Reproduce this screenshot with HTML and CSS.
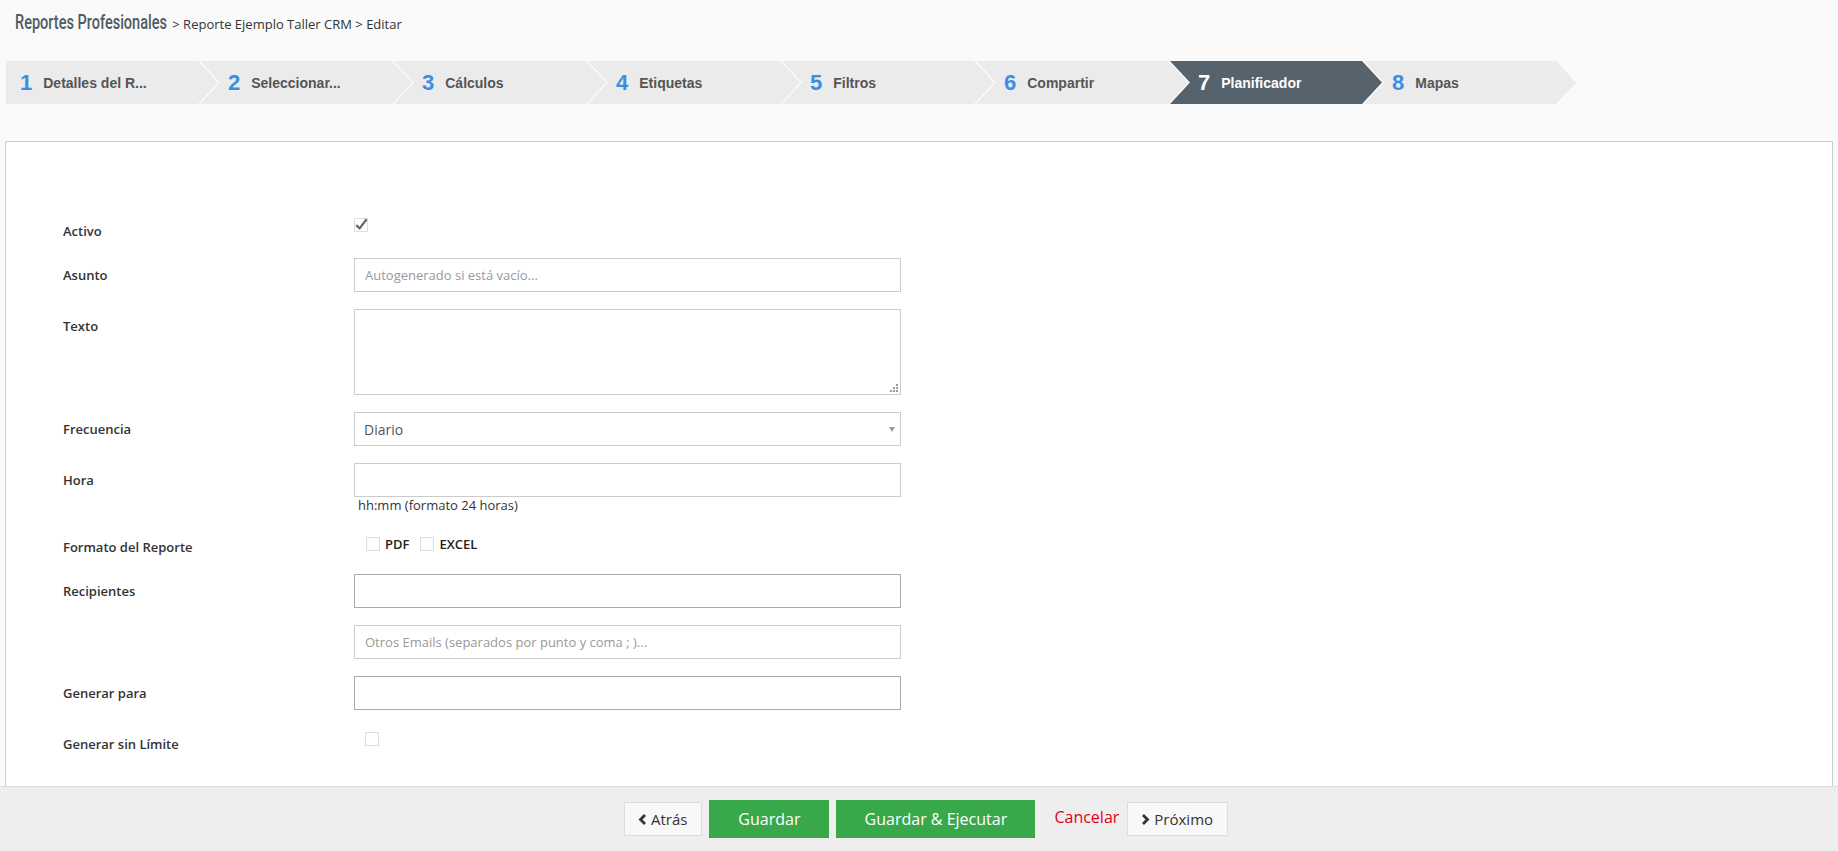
FILE: index.html
```html
<!DOCTYPE html>
<html lang="es">
<head>
    <meta charset="UTF-8">
    <meta name="viewport" content="width=device-width, initial-scale=1.0">
    <title>Reportes Profesionales - Editar</title>
    <link rel="stylesheet" href="styles.css">
</head>
<body>
    <div class="crumbs">
        <span class="crumbs-title">Reportes Profesionales</span>
        <span class="crumbs-path">&gt; Reporte Ejemplo Taller CRM &gt; Editar</span>
    </div>

    <ul class="wizard">
        <li class="step first"><span class="step-num">1</span><span class="step-name">Detalles del R...</span></li>
        <li class="step"><span class="step-num">2</span><span class="step-name">Seleccionar...</span></li>
        <li class="step"><span class="step-num">3</span><span class="step-name">Cálculos</span></li>
        <li class="step"><span class="step-num">4</span><span class="step-name">Etiquetas</span></li>
        <li class="step"><span class="step-num">5</span><span class="step-name">Filtros</span></li>
        <li class="step"><span class="step-num">6</span><span class="step-name">Compartir</span></li>
        <li class="step active"><span class="step-num">7</span><span class="step-name">Planificador</span></li>
        <li class="step"><span class="step-num">8</span><span class="step-name">Mapas</span></li>
    </ul>

    <div class="panel">
        <form class="form">
            <div class="row">
                <label class="row-label">Activo</label>
                <div class="row-ctrl">
                    <span class="check check-active">
                        <svg width="14" height="14" viewBox="0 0 14 14"><path d="M2.2 7.2 L5.6 10.4 L12.6 1.2" fill="none" stroke="#6a6a6a" stroke-width="2.3"/></svg>
                    </span>
                </div>
            </div>

            <div class="row">
                <label class="row-label">Asunto</label>
                <div class="row-ctrl">
                    <input class="input" type="text" placeholder="Autogenerado si está vacío...">
                </div>
            </div>

            <div class="row">
                <label class="row-label">Texto</label>
                <div class="row-ctrl textarea-wrap">
                    <textarea class="input textarea"></textarea>
                    <svg class="grip" width="8" height="8" viewBox="0 0 8 8">
                        <rect x="6" y="0" width="2" height="2" fill="#999"/>
                        <rect x="6" y="3" width="2" height="2" fill="#999"/>
                        <rect x="3" y="3" width="2" height="2" fill="#999"/>
                        <rect x="6" y="6" width="2" height="2" fill="#999"/>
                        <rect x="3" y="6" width="2" height="2" fill="#999"/>
                        <rect x="0" y="6" width="2" height="2" fill="#999"/>
                    </svg>
                </div>
            </div>

            <div class="row">
                <label class="row-label">Frecuencia</label>
                <div class="row-ctrl select-wrap">
                    <select class="input select">
                        <option>Diario</option>
                        <option>Semanal</option>
                        <option>Mensual</option>
                    </select>
                </div>
            </div>

            <div class="row">
                <label class="row-label">Hora</label>
                <div class="row-ctrl">
                    <input class="input" type="text">
                    <div class="help">hh:mm (formato 24 horas)</div>
                </div>
            </div>

            <div class="row">
                <label class="row-label">Formato del Reporte</label>
                <div class="row-ctrl formats">
                    <span class="check"></span><span class="format-name">PDF</span>
                    <span class="check"></span><span class="format-name">EXCEL</span>
                </div>
            </div>

            <div class="row">
                <label class="row-label">Recipientes</label>
                <div class="row-ctrl">
                    <input class="input strong" type="text">
                </div>
            </div>

            <div class="row">
                <span class="row-label"></span>
                <div class="row-ctrl">
                    <input class="input" type="text" placeholder="Otros Emails (separados por punto y coma ; )...">
                </div>
            </div>

            <div class="row">
                <label class="row-label">Generar para</label>
                <div class="row-ctrl">
                    <input class="input strong" type="text">
                </div>
            </div>

            <div class="row">
                <label class="row-label">Generar sin Límite</label>
                <div class="row-ctrl">
                    <span class="check check-limit"></span>
                </div>
            </div>
        </form>
    </div>

    <div class="footer">
        <button class="btn btn-light">
            <svg width="9" height="11" viewBox="0 0 9 11"><path d="M7 1 L2.5 5.5 L7 10" fill="none" stroke="#333" stroke-width="2.8"/></svg>
            Atrás
        </button>
        <button class="btn btn-green btn-save">Guardar</button>
        <button class="btn btn-green btn-run">Guardar &amp; Ejecutar</button>
        <a class="cancel" href="#">Cancelar</a>
        <button class="btn btn-light">
            <svg width="9" height="11" viewBox="0 0 9 11"><path d="M2 1 L6.5 5.5 L2 10" fill="none" stroke="#333" stroke-width="2.8"/></svg>
            Próximo
        </button>
    </div>
</body>
</html>
```

FILE: styles.css
```css
html, body {
    height: 100%;
}

body {
    margin: 0;
    display: flex;
    flex-direction: column;
    background: #fafafa;
    font-family: "Open Sans", Arial, sans-serif;
    color: #333;
}

/* breadcrumb */
.crumbs {
    display: flex;
    align-items: baseline;
    gap: 5px;
    padding: 10px 15px 0;
    height: 24px;
    line-height: 24px;
    flex: none;
}

/* condensed title, no narrow face installed so squeeze it */
.crumbs-title {
    display: inline-block;
    font-family: "Roboto", "Liberation Sans", sans-serif;
    font-weight: 500;
    font-size: 20px;
    color: #4e5a64;
    transform: scaleX(0.726);
    transform-origin: left center;
    margin-right: -57px;
}

.crumbs-path {
    font-size: 13px;
    color: #333;
}

/* wizard steps */
.wizard {
    list-style: none;
    margin: 27px 0 0;
    padding: 0 0 0 6px;
    display: flex;
    height: 43px;
    flex: none;
}

.step {
    flex: none;
    width: 212px;
    height: 43px;
    margin-left: -18px;
    box-sizing: border-box;
    padding-left: 28px;
    display: flex;
    align-items: center;
    background: #ebebeb;
    font-family: "Liberation Sans", Arial, sans-serif;
    font-weight: bold;
    clip-path: polygon(0 0, calc(100% - 20px) 0, 100% 50%, calc(100% - 20px) 100%, 0 100%, 20px 50%);
}

.step.first {
    margin-left: 0;
    padding-left: 14px;
    clip-path: polygon(0 0, calc(100% - 20px) 0, 100% 50%, calc(100% - 20px) 100%, 0 100%);
}

.step-num {
    font-size: 22px;
    line-height: 1;
    color: #3a8ee6;
    margin-right: 11px;
}

.step-name {
    font-size: 14px;
    color: #555;
}

.step.active {
    background: #56626c;
}

.step.active .step-num,
.step.active .step-name {
    color: #fff;
}

/* panel and form */
.panel {
    flex: 1;
    margin: 37px 5px 0 5px;
    border: 1px solid #ccc;
    border-bottom: none;
    background: #fff;
    padding: 72px 0 0 57px;
    min-height: 0;
}

.row {
    display: grid;
    grid-template-columns: 291px 547px;
    margin-bottom: 17px;
}

.row-label {
    padding-top: 7px;
    line-height: 20px;
    font-size: 13px;
    font-weight: 600;
    color: #333;
}

.input {
    display: block;
    width: 100%;
    height: 34px;
    box-sizing: border-box;
    border: 1px solid #ccc;
    border-radius: 0;
    padding: 0 10px;
    background: #fff;
    font-family: "Open Sans", Arial, sans-serif;
    font-size: 13px;
    color: #555;
    outline: none;
}

.input::placeholder {
    color: #999;
}

.input.strong {
    border-color: #aaa;
}

.textarea-wrap,
.select-wrap {
    position: relative;
}

.textarea {
    height: 86px;
    resize: none;
    padding: 8px 10px;
}

.grip {
    position: absolute;
    right: 3px;
    bottom: 3px;
}

.select {
    appearance: none;
    -webkit-appearance: none;
    font-size: 14px;
    padding-left: 9px;
}

.select-wrap::after {
    content: "";
    position: absolute;
    right: 6px;
    top: 15px;
    border-left: 3.5px solid transparent;
    border-right: 3.5px solid transparent;
    border-top: 5px solid #999;
}

.help {
    padding-left: 4px;
    font-size: 13px;
    line-height: 16px;
    color: #333;
}

.check {
    display: inline-block;
    width: 14px;
    height: 14px;
    box-sizing: border-box;
    border: 1px solid #ddd;
    background: #fff;
    vertical-align: top;
}

.check svg {
    display: block;
    margin: -1px 0 0 -1px;
    overflow: visible;
}

.check-active {
    margin-top: 4px;
}

.check-limit {
    margin: 5px 0 0 11px;
}

.formats {
    display: flex;
    align-items: center;
    height: 14px;
    padding: 7px 0 0 12px;
}

.format-name {
    font-size: 13px;
    font-weight: 600;
    color: #222;
    margin: 0 11px 0 5px;
}

/* footer buttons */
.footer {
    flex: none;
    height: 65px;
    box-sizing: border-box;
    border-top: 1px solid #ddd;
    background: #eee;
    display: flex;
    justify-content: center;
    align-items: center;
    gap: 7px;
    padding-left: 14px;
}

.btn {
    font-family: "Open Sans", Arial, sans-serif;
    cursor: pointer;
    border-radius: 0;
}

.btn-light {
    height: 34px;
    padding: 0 14px 0 13px;
    display: inline-flex;
    align-items: center;
    gap: 4px;
    border: 1px solid #ddd;
    background: #f8f8f8;
    color: #333;
    font-size: 15px;
}

.btn-green {
    height: 38px;
    border: none;
    background: #38a84a;
    color: #fff;
    font-size: 16px;
}

.btn-save {
    width: 120px;
}

.btn-run {
    width: 199px;
}

.cancel {
    color: #e0001b;
    font-size: 16px;
    text-decoration: none;
    padding: 0 1px 4px 12px;
}
```
